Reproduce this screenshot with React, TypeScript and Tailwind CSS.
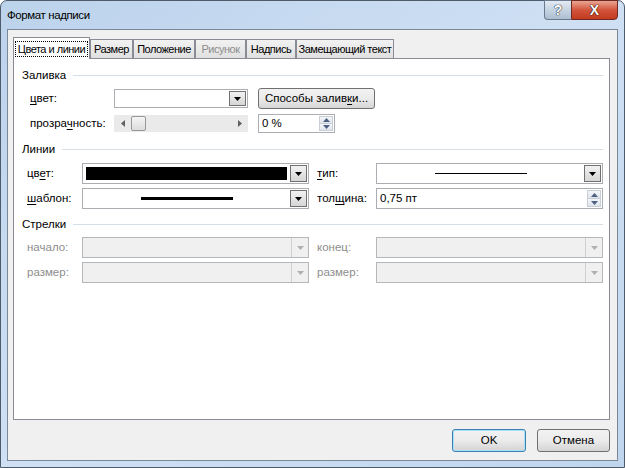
import React from "react";

const Tri = ({ color = "#000", up = false }: { color?: string; up?: boolean }) => (
  <svg width="7" height="4" viewBox="0 0 7 4" className="block">
    {up ? <polygon points="0,4 7,4 3.5,0" fill={color} /> : <polygon points="0,0 7,0 3.5,4" fill={color} />}
  </svg>
);

const DropBtn = ({ disabled = false }: { disabled?: boolean }) =>
  disabled ? (
    <div className="w-[17px] h-full flex items-center justify-center border-l border-[#d0d0d0]">
      <Tri color="#b0b0b0" />
    </div>
  ) : (
    <div className="w-[17px] h-[calc(100%-2px)] my-px mr-px flex items-center justify-center border border-[#707070] bg-gradient-to-b from-[#f2f2f2] to-[#d6d6d6]">
      <Tri />
    </div>
  );

const Combo = ({
  w,
  h = 21,
  disabled = false,
  children,
}: {
  w: string;
  h?: number;
  disabled?: boolean;
  children?: React.ReactNode;
}) => (
  <div
    className={`${w} flex items-stretch border ${disabled ? "border-[#b5b8bb] bg-[#f0f0f0]" : "border-[#abadb3] bg-white"}`}
    style={{ height: h }}
  >
    <div className="flex-1 flex items-center">{children}</div>
    <DropBtn disabled={disabled} />
  </div>
);

const Spin = () => (
  <div className="w-[15px] h-full flex flex-col py-px pr-px">
    <div className="flex-1 flex items-center justify-center border border-[#c9ced6] bg-gradient-to-b from-[#f4f6f9] to-[#dfe5ec]">
      <Tri color="#4d6185" up />
    </div>
    <div className="flex-1 flex items-center justify-center border border-t-0 border-[#c9ced6] bg-gradient-to-b from-[#f4f6f9] to-[#dfe5ec]">
      <Tri color="#4d6185" />
    </div>
  </div>
);

const Heading = ({ text, mt }: { text: string; mt: string }) => (
  <div className={`${mt} h-[14px] flex items-center pl-[8px] pr-[6px]`}>
    <span className="leading-[14px]">{text}</span>
    <div className="flex-1 ml-[7px] h-px bg-[#d5dfe5]" />
  </div>
);

const U = ({ children }: { children: React.ReactNode }) => <span className="underline underline-offset-2">{children}</span>;

export default function App() {
  return (
    <div className="w-[625px] h-[468px] overflow-hidden bg-white">
      <div className="w-[625px] h-[468px] flex flex-col rounded-t-[7px] border border-[#4e5b6b] bg-gradient-to-br from-[#bcd3ec] via-[#cfe0f4] to-[#c0d6ee] text-[11.5px] text-black whitespace-nowrap font-['Liberation_Sans',Arial,sans-serif]">
        {/* Title bar */}
        <div className="h-[28px] flex items-start">
          <div className="pl-[6px] pt-[7px] text-[11.5px] tracking-[-0.4px] text-black leading-[15px]">Формат надписи</div>
          <div className="ml-auto mr-[6px] flex -mt-px">
            <div className="w-[27px] h-[20px] rounded-bl-[4px] border border-[#6a7a8e] border-r-0 bg-gradient-to-b from-[#e3ebf4] via-[#c6d3e1] to-[#aebfd2] flex items-center justify-center">
              <span className="text-[14px] font-bold text-white leading-none [text-shadow:0_0_1px_#303a48,0_0_1px_#303a48,0_0_1px_#303a48]">?</span>
            </div>
            <div className="w-[47px] h-[20px] rounded-br-[4px] border border-[#6e2a22] bg-gradient-to-b from-[#e8a493] via-[#d1543a] to-[#c43a1f] flex items-center justify-center">
              <span className="text-[14px] font-bold text-white leading-none [text-shadow:0_0_1px_#3b0d06,0_0_1px_#3b0d06,0_0_1px_#3b0d06]">X</span>
            </div>
          </div>
        </div>
        {/* Client */}
        <div className="mx-[6px] h-[432px] border border-[#7b8898] bg-[#f0f0f0] pt-[7px] pl-[5px] pr-[7px]">
          {/* Tabs */}
          <div className="h-[21px] flex items-end text-[11px] tracking-[-0.5px]">
            <div className="relative z-10 w-[77px] h-[22px] -mb-px border border-b-0 border-[#898c95] bg-white flex items-center justify-center">
              <span className="border border-dotted border-black px-[2px] leading-[14px]">Цвета и линии</span>
            </div>
            {[
              ["Размер", "w-[43px]", false],
              ["Положение", "w-[62px]", false],
              ["Рисунок", "w-[51px]", true],
              ["Надпись", "w-[50px]", false],
              ["Замещающий текст", "w-[98px]", false],
            ].map(([t, w, dis]) => (
              <div
                key={t as string}
                className={`${w} h-[19px] border border-b-0 border-[#898c95] bg-gradient-to-b from-[#f2f2f2] to-[#e0e0e0] flex items-center justify-center overflow-hidden ${dis ? "text-[#8d8d8d]" : ""}`}
              >
                {t as string}
              </div>
            ))}
          </div>
          {/* Panel */}
          <div className="h-[362px] border border-[#898c95] bg-white flex flex-col">
            <Heading text="Заливка" mt="mt-[9px]" />
            <div className="mt-[6px] h-[21px] flex items-center pl-[16px]">
              <div className="w-[84px]">
                <U>ц</U>вет:
              </div>
              <Combo w="w-[134px]" h={19} />
              <div className="ml-[10px] w-[117px] h-[21px] rounded-[3px] border border-[#707070] bg-gradient-to-b from-[#f2f2f2] via-[#ebebeb] to-[#d6d6d6] flex items-center justify-center">
                Способы залив<U>к</U>и...
              </div>
            </div>
            <div className="mt-[5px] h-[19px] flex items-center pl-[16px]">
              <div className="w-[84px]">
                прозра<U>ч</U>ность:
              </div>
              <div className="w-[134px] h-[17px] bg-[#eaeaea] flex items-center">
                <div className="w-[17px] flex justify-center">
                  <svg width="4" height="7" viewBox="0 0 4 7">
                    <polygon points="4,0 4,7 0,3.5" fill="#606060" />
                  </svg>
                </div>
                <div className="w-[15px] h-[15px] rounded-[2px] border border-[#979797] bg-gradient-to-b from-[#f5f5f5] to-[#dcdcdc]" />
                <div className="flex-1" />
                <div className="w-[17px] flex justify-center">
                  <svg width="4" height="7" viewBox="0 0 4 7">
                    <polygon points="0,0 0,7 4,3.5" fill="#606060" />
                  </svg>
                </div>
              </div>
              <div className="ml-[10px] w-[77px] h-[19px] border border-[#abadb3] bg-white flex items-stretch">
                <div className="flex-1 flex items-center pl-[3px]">0 %</div>
                <Spin />
              </div>
            </div>

            <Heading text="Линии" mt="mt-[9px]" />
            <div className="mt-[7px] h-[21px] flex items-center pl-[13px]">
              <div className="w-[55px]">
                цв<U>е</U>т:
              </div>
              <Combo w="w-[227px]">
                <div className="ml-[3px] mr-[3px] flex-1 h-[13px] bg-black" />
              </Combo>
              <div className="ml-[8px] w-[59px]">
                <U>т</U>ип:
              </div>
              <Combo w="w-[227px]">
                <div className="flex-1 flex justify-center">
                  <div className="w-[92px] h-px bg-black" />
                </div>
              </Combo>
            </div>
            <div className="mt-[4px] h-[21px] flex items-center pl-[13px]">
              <div className="w-[55px]">
                <U>ш</U>аблон:
              </div>
              <Combo w="w-[227px]">
                <div className="flex-1 flex justify-center">
                  <div className="w-[92px] h-[3px] bg-black" />
                </div>
              </Combo>
              <div className="ml-[8px] w-[59px]">
                тол<U>щ</U>ина:
              </div>
              <div className="w-[227px] h-[21px] border border-[#abadb3] bg-white flex items-stretch">
                <div className="flex-1 flex items-center pl-[3px]">0,75 пт</div>
                <Spin />
              </div>
            </div>

            <Heading text="Стрелки" mt="mt-[8px]" />
            <div className="mt-[6px] h-[21px] flex items-center pl-[13px] text-[#8d8d8d]">
              <div className="w-[55px]">начало:</div>
              <Combo w="w-[227px]" disabled />
              <div className="ml-[8px] w-[59px]">конец:</div>
              <Combo w="w-[227px]" disabled />
            </div>
            <div className="mt-[4px] h-[21px] flex items-center pl-[13px] text-[#8d8d8d]">
              <div className="w-[55px]">размер:</div>
              <Combo w="w-[227px]" disabled />
              <div className="ml-[8px] w-[59px]">размер:</div>
              <Combo w="w-[227px]" disabled />
            </div>
          </div>
          {/* Buttons */}
          <div className="mt-[9px] flex justify-end gap-[11px]">
            <div className="w-[74px] h-[23px] rounded-[3px] border border-[#3c7fb1] shadow-[inset_0_0_0_1px_#a6e3f8] bg-gradient-to-b from-[#f2f2f2] via-[#ebebeb] to-[#d4d4d4] flex items-center justify-center">
              OK
            </div>
            <div className="w-[73px] h-[23px] rounded-[3px] border border-[#707070] bg-gradient-to-b from-[#f2f2f2] via-[#ebebeb] to-[#d4d4d4] flex items-center justify-center">
              Отмена
            </div>
          </div>
        </div>
      </div>
    </div>
  );
}
